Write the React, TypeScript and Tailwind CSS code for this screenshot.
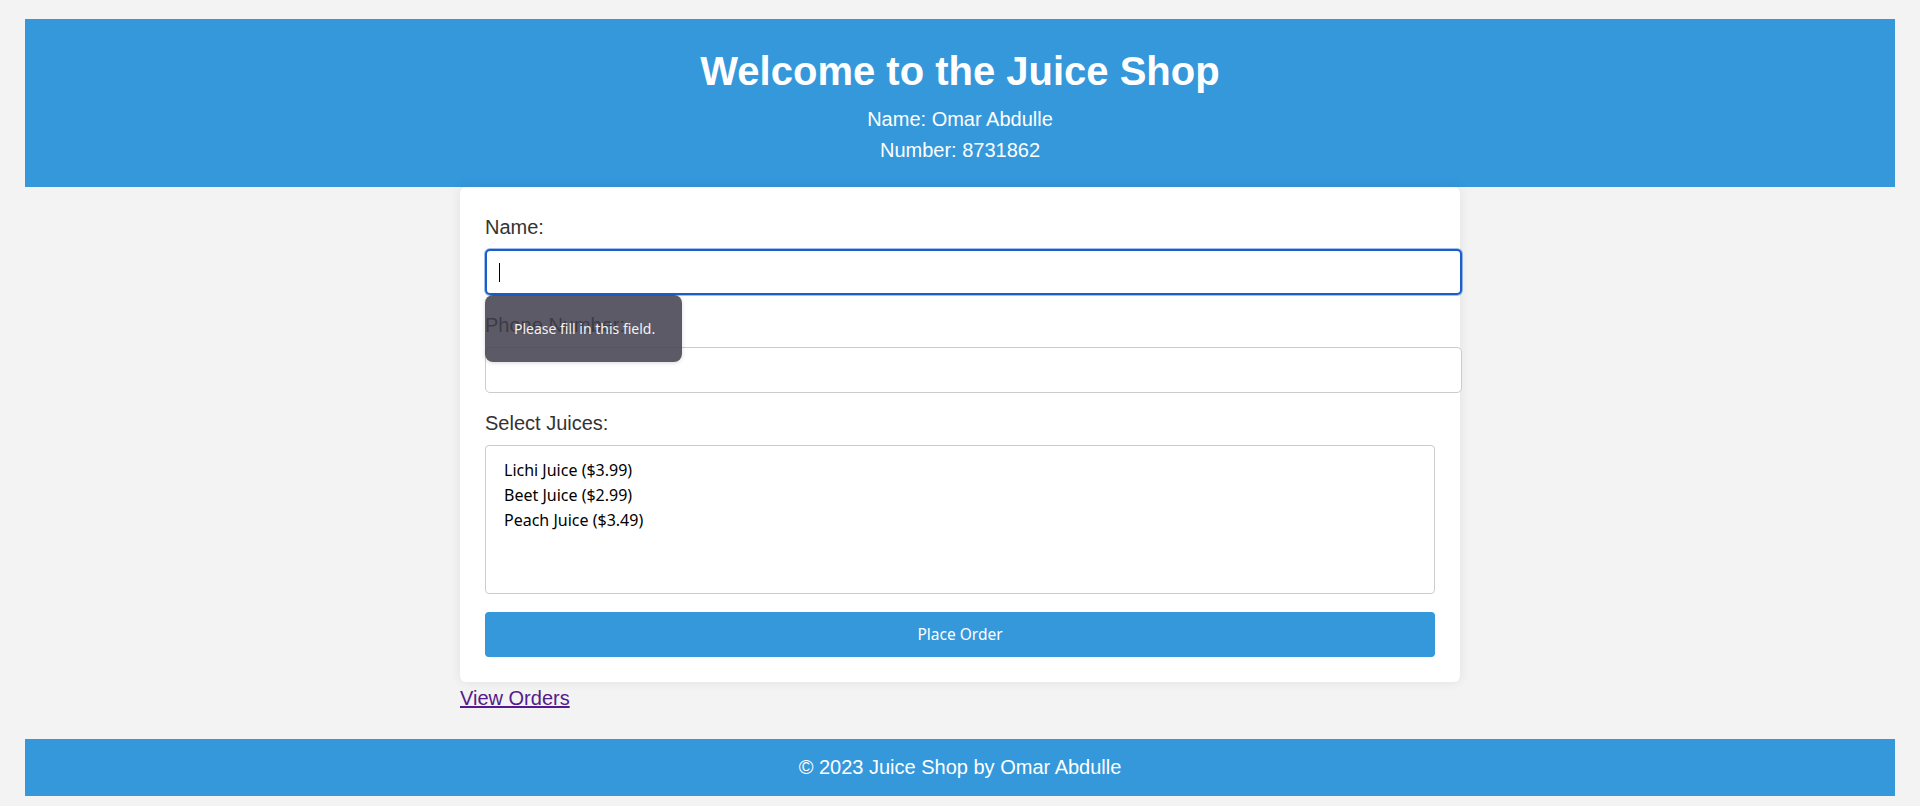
const juices = [
  { name: "Lichi Juice", price: "3.99" },
  { name: "Beet Juice", price: "2.99" },
  { name: "Peach Juice", price: "3.49" },
];

const App = () => {
  return (
    <div className="min-h-screen bg-[#f3f3f3] px-[25px] pt-[19px] pb-[8px] font-['Liberation_Sans',Arial,sans-serif] text-[20px] leading-[23px] text-[#333]">
      {/* Header */}
      <header className="bg-[#3498db] pt-[29px] pb-[25px] text-center text-white">
        <h1 className="text-[40px] font-bold leading-[46px]">Welcome to the Juice Shop</h1>
        <p className="mt-[14px] leading-[23px]">Name: Omar Abdulle</p>
        <p className="mt-[8px] leading-[23px]">Number: 8731862</p>
      </header>

      <main className="mx-auto w-[1000px]">
        <form className="rounded-[6px] bg-white px-[25px] pt-[29px] pb-[25px] shadow-[0_0_12px_rgba(0,0,0,0.08)]">
          <label className="mb-[10px] block leading-[23px]">Name:</label>
          <div className="relative mb-[19px]">
            <input
              type="text"
              readOnly
              className="block h-[46px] w-[977px] rounded-[5px] border-2 border-[#1a5fc9] bg-white px-[12px] outline-none ring-1 ring-[#1a5fc9]/40"
            />
            <span className="absolute left-[14px] top-[14px] h-[19px] w-px bg-black" />
            {/* validation bubble */}
            <div className="absolute left-0 top-[46px] z-10 flex h-[67px] items-center rounded-[8px] bg-[rgba(63,61,75,0.85)] pl-[29px] pr-[27px] font-['Noto_Sans',sans-serif] text-[14px] text-[#f2f2f2] shadow-[0_1px_4px_rgba(0,0,0,0.15)]">
              Please fill in this field.
            </div>
          </div>

          <label className="mb-[10px] block leading-[23px]">Phone Number:</label>
          <input
            type="text"
            className="mb-[19px] block h-[46px] w-[977px] rounded-[5px] border border-[#ccc] bg-white px-[12px] outline-none"
          />

          <label className="mb-[10px] block leading-[23px]">Select Juices:</label>
          <div
            role="listbox"
            className="mb-[18px] h-[149px] rounded-[4px] border border-[#ccc] bg-white pl-[18px] pt-[12px] font-['Noto_Sans',sans-serif] text-[16px] leading-[25px] text-black"
          >
            {juices.map((j) => (
              <div key={j.name}>
                {j.name} (${j.price})
              </div>
            ))}
          </div>

          <button
            type="button"
            className="block h-[45px] w-full rounded-[4px] bg-[#3498db] font-['Noto_Sans',sans-serif] text-[15.5px] text-white"
          >
            Place Order
          </button>
        </form>

        <a href="#" className="mt-[5px] block w-fit leading-[23px] text-[#551a8b] underline">
          View Orders
        </a>
      </main>

      <footer className="mt-[29px] flex h-[57px] items-center justify-center bg-[#3498db] text-white">
        © 2023 Juice Shop by Omar Abdulle
      </footer>
    </div>
  );
};

export default App;
